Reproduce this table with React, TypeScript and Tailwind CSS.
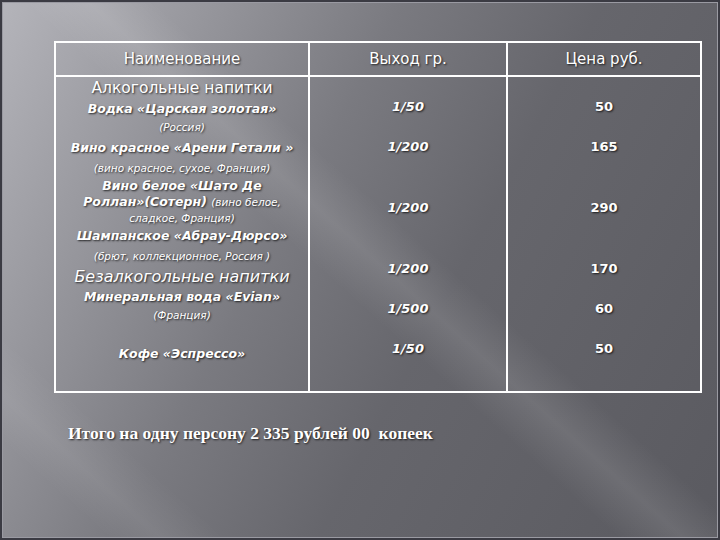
const shadow = "[text-shadow:1px_1px_2px_rgba(0,0,0,0.75)]";

const names: { text: string; h: number; kind: "group" | "item" | "note" | "soft" }[] = [
  { text: "Алкогольные напитки", h: 22, kind: "group" },
  { text: "Водка «Царская золотая»", h: 19, kind: "item" },
  { text: "(Россия)", h: 19, kind: "note" },
  { text: "Вино красное «Арени Гетали »", h: 21, kind: "item" },
  { text: "(вино красное, сухое, Франция)", h: 20, kind: "note" },
  { text: "Вино белое «Шато Де", h: 16, kind: "item" },
  { text: "", h: 16, kind: "item" },
  { text: "сладкое, Франция)", h: 16, kind: "note" },
  { text: "Шампанское «Абрау-Дюрсо»", h: 20, kind: "item" },
  { text: "(брют, коллекционное, Россия )", h: 20, kind: "note" },
  { text: "Безалкогольные напитки", h: 21, kind: "soft" },
  { text: "Минеральная вода «Evian»", h: 20, kind: "item" },
  { text: "(Франция)", h: 16, kind: "note" },
  { text: "Кофе «Эспрессо»", h: 62, kind: "item" },
];

const kindClass = {
  group: "text-[15.5px]",
  item: "text-[12.5px] font-bold italic",
  note: "text-[10.5px] italic",
  soft: "text-[16px] italic",
};

const heightClass: { [h: number]: string } = {
  16: "h-[16px] leading-[16px]",
  19: "h-[19px] leading-[19px]",
  20: "h-[20px] leading-[20px]",
  21: "h-[21px] leading-[21px]",
  22: "h-[22px] leading-[22px]",
  62: "h-[62px] leading-[62px]",
};

const values = [
  { out: "1/50", price: "50", mt: "mt-[20px]" },
  { out: "1/200", price: "165", mt: "mt-[20px]" },
  { out: "1/200", price: "290", mt: "mt-[41px]" },
  { out: "1/200", price: "170", mt: "mt-[41px]" },
  { out: "1/500", price: "60", mt: "mt-[20px]" },
  { out: "1/50", price: "50", mt: "mt-[20px]" },
];

export default function App() {
  return (
    <div className="h-[540px] w-[720px] bg-[#3b3b43] p-[2px]">
      <div
        className={`h-full border border-[#9a9aa2] bg-[linear-gradient(42deg,transparent_8%,rgba(255,255,255,0.07)_12%,transparent_17%,transparent_47%,rgba(255,255,255,0.1)_52%,transparent_57%),linear-gradient(118deg,#b4b4ba_0%,#9a9aa0_18%,#7a7a80_40%,#66666c_60%,#5a5a60_100%)] pt-[38px] pl-[51px] font-['DejaVu_Sans',sans-serif] text-white ${shadow}`}
      >
        <div className="w-[648px] border-2 border-white">
          <div className="grid h-[34px] grid-cols-[254px_198px_1fr] border-b-2 border-white text-[15px] leading-[32px]">
            <div className="border-r-2 border-white text-center">Наименование</div>
            <div className="border-r-2 border-white text-center">Выход гр.</div>
            <div className="text-center">Цена руб.</div>
          </div>
          <div className="grid h-[314px] grid-cols-[254px_198px_1fr]">
            <div className="border-r-2 border-white text-center">
              {names.map((n, i) => (
                <div key={i} className={`${heightClass[n.h]} ${kindClass[n.kind]} whitespace-nowrap`}>
                  {i === 6 ? (
                    <>
                      <span className="text-[12.5px] font-bold italic">Роллан»(Сотерн) </span>
                      <span className="text-[10.5px] font-normal italic">(вино белое,</span>
                    </>
                  ) : (
                    n.text
                  )}
                </div>
              ))}
            </div>
            <div className="border-r-2 border-white text-center text-[13px] font-bold italic">
              {values.map((v, i) => (
                <div key={i} className={`${v.mt} h-[20px] leading-[20px]`}>
                  {v.out}
                </div>
              ))}
            </div>
            <div className="text-center text-[13px] font-bold">
              {values.map((v, i) => (
                <div key={i} className={`${v.mt} h-[20px] leading-[20px]`}>
                  {v.price}
                </div>
              ))}
            </div>
          </div>
        </div>
        <div className="mt-[30px] pl-[14px] font-['Liberation_Serif',serif] text-[17.5px] leading-[20px] font-bold">
          Итого на одну персону 2 335 рублей 00&nbsp; копеек
        </div>
      </div>
    </div>
  );
}
